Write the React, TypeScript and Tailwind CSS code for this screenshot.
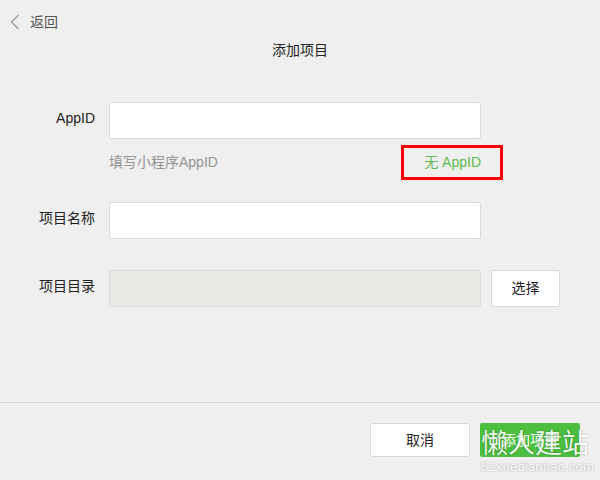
export default function App() {
  return (
    <div className="relative flex h-[480px] w-[600px] flex-col overflow-hidden bg-[#efefef] font-['Liberation_Sans','Noto_Sans_CJK_SC',sans-serif] text-[14px] text-[#353535]">
      {/* header */}
      <div className="flex items-center pl-[10px] pt-[12px] leading-[20px]">
        <svg width="10" height="16" viewBox="0 0 10 16" className="mt-[-1px]">
          <path d="M8.5 1 L1.5 8 L8.5 15" fill="none" stroke="#9a9a9a" strokeWidth="1.3" />
        </svg>
        <span className="ml-[10px] text-[#555]">返回</span>
      </div>
      <div className="mt-[8px] text-center leading-[20px] text-[#222]">添加项目</div>

      {/* form */}
      <div className="mt-[42px] flex items-start">
        <label className="w-[95px] pt-[6px] text-right leading-[20px] text-[#222]">AppID</label>
        <div className="ml-[14px] h-[37px] w-[372px] rounded-[2px] border border-[#d9d9d9] bg-white" />
      </div>
      <div className="ml-[109px] mt-[5px] flex h-[35px] w-[372px] items-center justify-between leading-[18px]">
        <span className="text-[#949494]">填写小程序AppID</span>
        <span className="relative text-[#5dbb4e]">
          无 AppID
          <span className="absolute bottom-[-9px] left-[-23px] right-[-22px] top-[-8px] border-[3px] border-[#ff0000]" />
        </span>
      </div>

      <div className="mt-[23px] flex items-start">
        <label className="w-[95px] pt-[6px] text-right leading-[20px] text-[#222]">项目名称</label>
        <div className="ml-[14px] h-[37px] w-[372px] rounded-[2px] border border-[#d9d9d9] bg-white" />
      </div>

      <div className="mt-[31px] flex items-start">
        <label className="w-[95px] pt-[6px] text-right leading-[20px] text-[#222]">项目目录</label>
        <div className="ml-[14px] h-[37px] w-[372px] rounded-[2px] border border-[#d9d9d9] bg-[#eae9e3]" />
        <button className="ml-[10px] h-[37px] w-[69px] rounded-[2px] border border-[#d9d9d9] bg-white text-[#222]">
          选择
        </button>
      </div>

      {/* footer */}
      <div className="mt-auto flex h-[78px] justify-end gap-[10px] border-t border-[#d8d8d8] pr-[20px] pt-[20px]">
        <button className="h-[34px] w-[100px] rounded-[2px] border border-[#d9d9d9] bg-white text-[#222]">
          取消
        </button>
        <button className="h-[34px] w-[100px] rounded-[2px] bg-[#4cbf40] text-white">添加项目</button>
      </div>

      {/* watermark */}
      <div className="pointer-events-none absolute left-[481px] top-[428px] flex flex-col items-start text-white opacity-90 [text-shadow:0_0_2px_rgba(0,0,0,0.4)]">
        <span className="text-[27px] leading-[32px]">懒人建站</span>
        <span className="text-[13px] leading-[14px] tracking-[0.2px]">51xuediannao.com</span>
      </div>
    </div>
  )
}
